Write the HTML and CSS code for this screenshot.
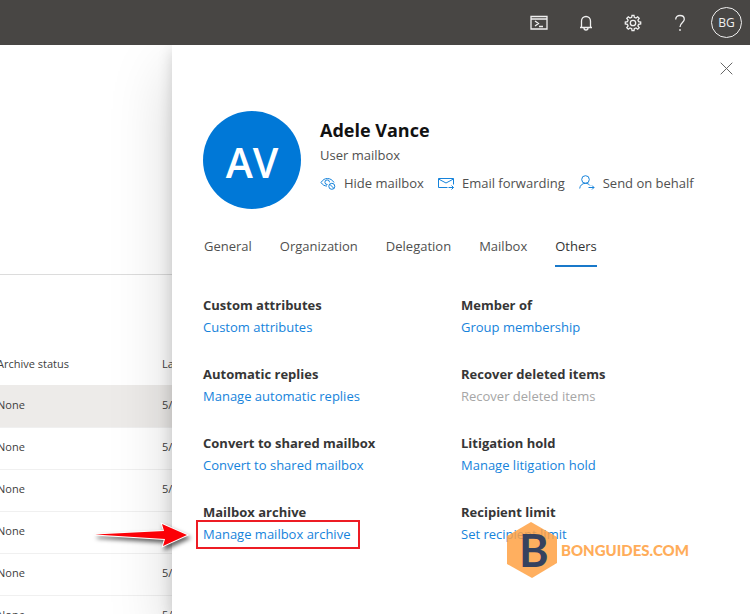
FILE: index.html
```html
<!DOCTYPE html>
<html lang="en">
<head>
<meta charset="utf-8">
<title>Mailbox details</title>
<link rel="stylesheet" href="styles.css">
</head>
<body>
<header class="topbar">
  <button class="topbar-btn" aria-label="Cloud Shell">
    <svg width="18" height="18" viewBox="0 0 18 18"><path d="M1 2.500h16v12.500H1zM1 5h16M5 7l3.500 2.500L5 12M9 12.500h4"/></svg>
  </button>
  <button class="topbar-btn" aria-label="Notifications">
    <svg width="18" height="18" viewBox="0 0 18 18"><path d="M3 13.500h12M4.500 13.500V7a4.500 4.500 0 0 1 9 0v6.500M7 14a2 2 0 0 0 4 0"/></svg>
  </button>
  <button class="topbar-btn" aria-label="Settings">
    <svg width="18" height="18" viewBox="0 0 18 18"><path d="M7.700 3.400 8 1.300h2l.3 2.100 1.700.7 1.700-1.300 1.500 1.500-1.300 1.700.7 1.700 2.100.3v2l-2.100.3-.7 1.700 1.300 1.700-1.500 1.500-1.700-1.300-1.700.7-.3 2.100H8l-.3-2.100-1.700-.7-1.700 1.300-1.500-1.500L4.100 12l-.7-1.700L1.300 10V8l2.100-.3L4.100 6 2.800 4.300l1.500-1.500L6 4.100z"/><circle cx="9" cy="9" r="2.700"/></svg>
  </button>
  <button class="topbar-btn" aria-label="Help">
    <svg width="18" height="18" viewBox="0 0 18 18"><path d="M4.700 5.500C4.700 3 6.500 1.500 9 1.500s4.300 1.500 4.300 3.800C13.300 8.500 9 8.500 9 13M9 15v2"/></svg>
  </button>
  <button class="account">BG</button>
</header>
<div class="workspace">
  <main class="list">
    <div class="list-intro"></div>
    <table class="mailboxes">
      <thead><tr><th>Archive status</th><th>Last modified</th></tr></thead>
      <tbody>
        <tr class="selected"><td>None</td><td>5/</td></tr>
        <tr><td>None</td><td>5/</td></tr>
        <tr><td>None</td><td>5/</td></tr>
        <tr><td>None</td><td>5/</td></tr>
        <tr><td>None</td><td>5/</td></tr>
        <tr><td>None</td><td>5/</td></tr>
      </tbody>
    </table>
  </main>
  <aside class="panel">
    <button class="close" aria-label="Close">
      <svg width="13" height="13" viewBox="0 0 13 13"><path d="M.7.7l11.600 11.600M12.300.7.7 12.300"/></svg>
    </button>
    <section class="profile">
      <div class="avatar">AV</div>
      <div class="identity">
        <h1>Adele Vance</h1>
        <p>User mailbox</p>
        <div class="actions">
          <button class="action">
            <svg width="16" height="16" viewBox="0 0 16 16"><path d="M1 7.500C3 4.500 5 3.500 7.500 3.500s5 1.500 6.500 4M1 7.500c1.700 2.500 3.500 3.500 6 3.500M9.500 7.300A2.300 2.300 0 1 0 7.500 9.500"/><circle cx="11.800" cy="11.300" r="3"/><path d="M9.700 9.200l4.200 4.200"/></svg>
            Hide mailbox
          </button>
          <button class="action">
            <svg width="16" height="16" viewBox="0 0 16 16"><path d="M9.500 12.500H.5v-9h15v6M.5 4 8 8l7.500-4M10.500 12.500h5M13.500 10.500l2 2-2 2"/></svg>
            Email forwarding
          </button>
          <button class="action">
            <svg width="16" height="16" viewBox="0 0 16 16"><circle cx="6.500" cy="4.500" r="3.800"/><path d="M.7 13.500c.3-3 2.500-5.200 5.800-5.200 2 0 3.500.8 4.500 2.200M9.500 12.500H15M13 10.500l2 2-2 2"/></svg>
            Send on behalf
          </button>
        </div>
      </div>
    </section>
    <nav class="tabs">
      <a href="#general">General</a>
      <a href="#organization">Organization</a>
      <a href="#delegation">Delegation</a>
      <a href="#mailbox">Mailbox</a>
      <a href="#others" class="active">Others</a>
    </nav>
    <section class="settings">
      <div class="setting"><h2>Custom attributes</h2><a href="#attributes">Custom attributes</a></div>
      <div class="setting"><h2>Member of</h2><a href="#groups">Group membership</a></div>
      <div class="setting"><h2>Automatic replies</h2><a href="#replies">Manage automatic replies</a></div>
      <div class="setting"><h2>Recover deleted items</h2><a class="disabled" aria-disabled="true">Recover deleted items</a></div>
      <div class="setting"><h2>Convert to shared mailbox</h2><a href="#convert">Convert to shared mailbox</a></div>
      <div class="setting"><h2>Litigation hold</h2><a href="#litigation">Manage litigation hold</a></div>
      <div class="setting"><h2>Mailbox archive</h2>
        <a href="#archive" class="marked">Manage mailbox archive
          <svg class="arrow" width="102" height="32" viewBox="0 0 102 32" aria-hidden="true"><path d="M3 14.500 72 11 70 4l25 11-24 11 2-7z"/></svg>
        </a>
      </div>
      <div class="setting"><h2>Recipient limit</h2>
        <a href="#limit">Set recipient limit</a>
        <div class="brand">
          <svg width="50" height="56" viewBox="0 0 50 56"><path class="brand-hex" d="M24 0 50 15V41L25 56 0 42V14z"/><text x="12" y="45">B</text></svg>
          <span>BONGUIDES.COM</span>
        </div>
      </div>
    </section>
  </aside>
</div>
</body>
</html>
```
FILE: styles.css
```css
* { box-sizing: border-box; }

body {
  margin: 0;
  height: 100vh;
  display: flex;
  flex-direction: column;
  overflow: hidden;
  background: #fff;
  color: #505050;
  font: 13px/22px "Open Sans", "Noto Sans", sans-serif;
}

button {
  border: 0;
  padding: 0;
  background: none;
  color: inherit;
  font: inherit;
  cursor: pointer;
}

a { text-decoration: none; }

svg {
  display: block;
  fill: none;
  stroke: currentColor;
}

h1, h2, p { margin: 0; }

.topbar {
  flex: none;
  height: 45px;
  padding: 0 8px;
  display: flex;
  align-items: center;
  justify-content: flex-end;
  gap: 29px;
  background: #484644;
  color: #f0f0f0;
}

.topbar svg { stroke-width: 1.3; }

.account {
  width: 31px;
  height: 31px;
  margin-left: -7px;
  border: 1px solid #f0f0f0;
  border-radius: 50%;
  font-size: 12px;
  font-weight: 500;
  line-height: 28px;
}

.workspace {
  flex: 1;
  min-height: 0;
  display: grid;
  grid-template-columns: 172px 1fr;
}

.list {
  min-width: 0;
  overflow: hidden;
}

.list-intro {
  height: 230px;
  border-bottom: 1px solid #dcdcdc;
}

.mailboxes {
  width: 260px;
  margin-top: 70px;
  table-layout: fixed;
  border-collapse: collapse;
  color: #404040;
  font-size: 11px;
  line-height: 16px;
  white-space: nowrap;
}

.mailboxes th, .mailboxes td {
  height: 42px;
  padding: 0 0 2px;
  font-weight: 400;
  text-align: left;
}

.mailboxes th { height: 40px; }
.mailboxes th:first-child, .mailboxes td:first-child { width: 162px; }
.mailboxes th:first-child, .mailboxes td:first-child { text-indent: -3px; }
.mailboxes tbody tr { border-bottom: 1px solid #f0f0f0; }
.mailboxes .selected { background: #edebe9; }

.panel {
  position: relative;
  padding: 66px 31px 0;
  background: #fff;
  box-shadow: 0 26px 58px rgba(0, 0, 0, .17), 0 5px 14px rgba(0, 0, 0, .16);
  clip-path: inset(0 0 0 -80px);
}

.close {
  position: absolute;
  top: 17px;
  right: 17px;
  color: #666;
}

.profile {
  display: flex;
  gap: 19px;
}

.avatar {
  flex: none;
  width: 98px;
  height: 98px;
  border-radius: 50%;
  background: #0078d7;
  color: #fff;
  font-size: 41px;
  font-weight: 600;
  line-height: 102px;
  text-align: center;
}

.identity { padding-top: 6px; }

.identity h1 {
  color: #111;
  font-size: 18px;
  font-weight: 700;
  line-height: 26px;
}

.identity p { padding-top: 1px; }

.actions {
  display: flex;
  gap: 14px;
  margin-top: 6px;
  white-space: nowrap;
}

.action {
  display: flex;
  align-items: center;
  gap: 8px;
}

.action svg { color: #1683db; }

.tabs {
  display: flex;
  gap: 28px;
  margin-top: 26px;
  padding-left: 1px;
}

.tabs a {
  height: 32px;
  color: #505050;
}

.tabs .active {
  border-bottom: 2px solid #1979ca;
  color: #333;
  font-weight: 500;
}

.settings {
  display: grid;
  grid-template-columns: 1fr 1fr;
  row-gap: 25px;
  margin-top: 27px;
}

.setting { position: relative; }

.setting h2 {
  color: #363636;
  font-size: 13px;
  font-weight: 700;
  line-height: 22px;
}

.setting a {
  display: inline-block;
  color: #1683db;
}

.setting .disabled { color: #a6a6a6; }

.setting .marked { position: relative; }

.marked::before {
  content: "";
  position: absolute;
  inset: -3px -10px -4px -7px;
  border: 2px solid #ed1c24;
}

.arrow {
  position: absolute;
  top: -3px;
  left: -111px;
  overflow: visible;
  fill: #fb0007;
  stroke: #fff;
  stroke-width: 2;
  paint-order: stroke;
  filter: drop-shadow(2px 3px 2px rgba(0, 0, 0, .6));
}

.brand {
  position: absolute;
  top: 21px;
  left: 46px;
  display: flex;
  align-items: center;
  gap: 4px;
  color: #ffad5a;
  font: 900 15px/22px Lato, sans-serif;
}

.brand svg { stroke: none; }
.brand-hex { fill: rgba(255, 160, 64, .84); }

.brand text {
  fill: #36425f;
  font: 700 45px Lato, sans-serif;
}
```
